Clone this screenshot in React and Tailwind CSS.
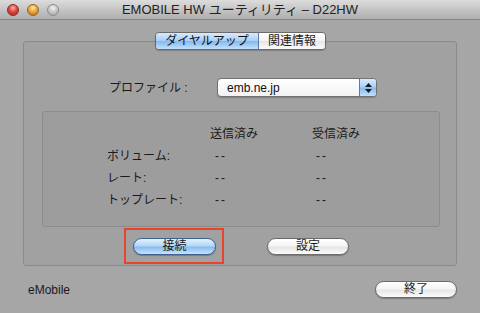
import React from 'react';

const FONT = '"Liberation Sans", "Noto Sans CJK JP", sans-serif';

function Light({ color }) {
  const styles = {
    red: 'bg-[radial-gradient(circle_at_50%_30%,#ffb3ad_0%,#e2463f_45%,#a8231f_100%)] border-[#8e2a25]',
    yellow: 'bg-[radial-gradient(circle_at_50%_30%,#ffe9a8_0%,#eaa53a_45%,#b06a14_100%)] border-[#98651e]',
    gray: 'bg-[radial-gradient(circle_at_50%_30%,#f2f2f2_0%,#c6c6c6_50%,#9c9c9c_100%)] border-[#8c8c8c]',
  };
  return <span className={`w-[12px] h-[12px] rounded-full border ${styles[color]}`} />;
}

function AquaButton({ children, blue, width }) {
  return (
    <button
      className={
        'h-[17px] rounded-full border text-[12px] leading-none flex items-center justify-center text-[#1a1a1a] shadow-[0_1px_1px_rgba(0,0,0,0.25)] ' +
        (blue
          ? 'border-[#3e5f90] bg-[linear-gradient(#e4f1fd_0%,#b2d5f7_48%,#86bbef_52%,#c6e3fd_100%)]'
          : 'border-[#6b6b6b] bg-[linear-gradient(#ffffff_0%,#f4f4f4_48%,#e4e4e4_52%,#fbfbfb_100%)]')
      }
      style={{ width }}
    >
      {children}
    </button>
  );
}

export default function App() {
  return (
    <div className="w-[480px] h-[313px] flex flex-col bg-[#a6a6a6] overflow-hidden" style={{ fontFamily: FONT }}>
      {/* Title bar */}
      <div className="h-[20px] flex items-center relative bg-[linear-gradient(#dcdcdc,#aeaeae)] border-b border-[#858585]">
        <div className="flex items-center gap-[8px] pl-[7px]">
          <Light color="red" />
          <Light color="yellow" />
          <Light color="gray" />
        </div>
        <span className="absolute inset-x-0 text-center text-[13px] text-[#222]">EMOBILE HW ユーティリティ – D22HW</span>
      </div>

      {/* Body */}
      <div className="flex-1 flex flex-col px-[23px] pt-[21px]">
        <div className="h-[225px] border border-[#8a8a8a] rounded-[3px] bg-[#a1a1a1] flex flex-col">
          {/* Tabs */}
          <div className="flex justify-center -mt-[10px] pl-[1px]">
            <div className="flex h-[18px] border border-[#6a6a6a] rounded-[4px] overflow-hidden text-[12px] leading-none shadow-[0_1px_1px_rgba(0,0,0,0.2)]">
              <span className="w-[103px] flex items-center justify-center text-[#111] bg-[linear-gradient(#d8eafc_0%,#a9cff6_48%,#84b9ef_52%,#c3e1fd_100%)] border-r border-[#5d7aa6]">ダイヤルアップ</span>
              <span className="w-[66px] flex items-center justify-center text-[#222] bg-[linear-gradient(#ffffff_0%,#f3f3f3_48%,#e6e6e6_52%,#fafafa_100%)]">関連情報</span>
            </div>
          </div>

          {/* Profile */}
          <div className="flex items-center mt-[28px] pl-[85px]">
            <span className="w-[108px] text-[12px] text-[#1a1a1a]">プロファイル :</span>
            <div className="w-[160px] h-[19px] border border-[#727272] rounded-[4px] bg-[linear-gradient(#ffffff,#f2f2f2)] flex items-center shadow-[0_1px_1px_rgba(0,0,0,0.2)] overflow-hidden">
              <span className="flex-1 pl-[9px] text-[12px] text-[#111]">emb.ne.jp</span>
              <span className="w-[17px] h-full border-l border-[#5d7aa6] bg-[linear-gradient(#d8eafc_0%,#a9cff6_48%,#84b9ef_52%,#c3e1fd_100%)] flex flex-col items-center justify-center gap-[2px]">
                <svg width="7" height="4" viewBox="0 0 7 4"><path d="M3.5 0L7 4H0z" fill="#1b1b1b" /></svg>
                <svg width="7" height="4" viewBox="0 0 7 4"><path d="M0 0h7L3.5 4z" fill="#1b1b1b" /></svg>
              </span>
            </div>
          </div>

          {/* Stats box */}
          <div className="mt-[14px] ml-[18px] w-[398px] h-[116px] border border-[#8c8c8c] rounded-[3px] bg-[#9d9d9d] pt-[11px] pl-[64px] text-[12px] text-[#1a1a1a]">
            <div className="grid grid-cols-[103px_102px_auto] auto-rows-[22px] items-center">
              <span />
              <span>送信済み</span>
              <span>受信済み</span>
              <span>ボリューム:</span>
              <span className="pl-[5px] tracking-[2px]">--</span>
              <span className="pl-[4px] tracking-[2px]">--</span>
              <span>レート:</span>
              <span className="pl-[5px] tracking-[2px]">--</span>
              <span className="pl-[4px] tracking-[2px]">--</span>
              <span>トップレート:</span>
              <span className="pl-[5px] tracking-[2px]">--</span>
              <span className="pl-[4px] tracking-[2px]">--</span>
            </div>
          </div>

          {/* Buttons */}
          <div className="flex items-center mt-[1px] pl-[100px]">
            <div className="w-[100px] h-[36px] border-2 border-[#e8432e] flex items-center pl-[7px]">
              <AquaButton blue width={83}>接続</AquaButton>
            </div>
            <div className="ml-[43px]">
              <AquaButton width={82}>設定</AquaButton>
            </div>
          </div>
        </div>

        {/* Footer */}
        <div className="flex items-center justify-between mt-[13px] pl-[5px]">
          <span className="text-[12px] text-[#1a1a1a] pt-[2px]">eMobile</span>
          <AquaButton width={82}>終了</AquaButton>
        </div>
      </div>
    </div>
  );
}
